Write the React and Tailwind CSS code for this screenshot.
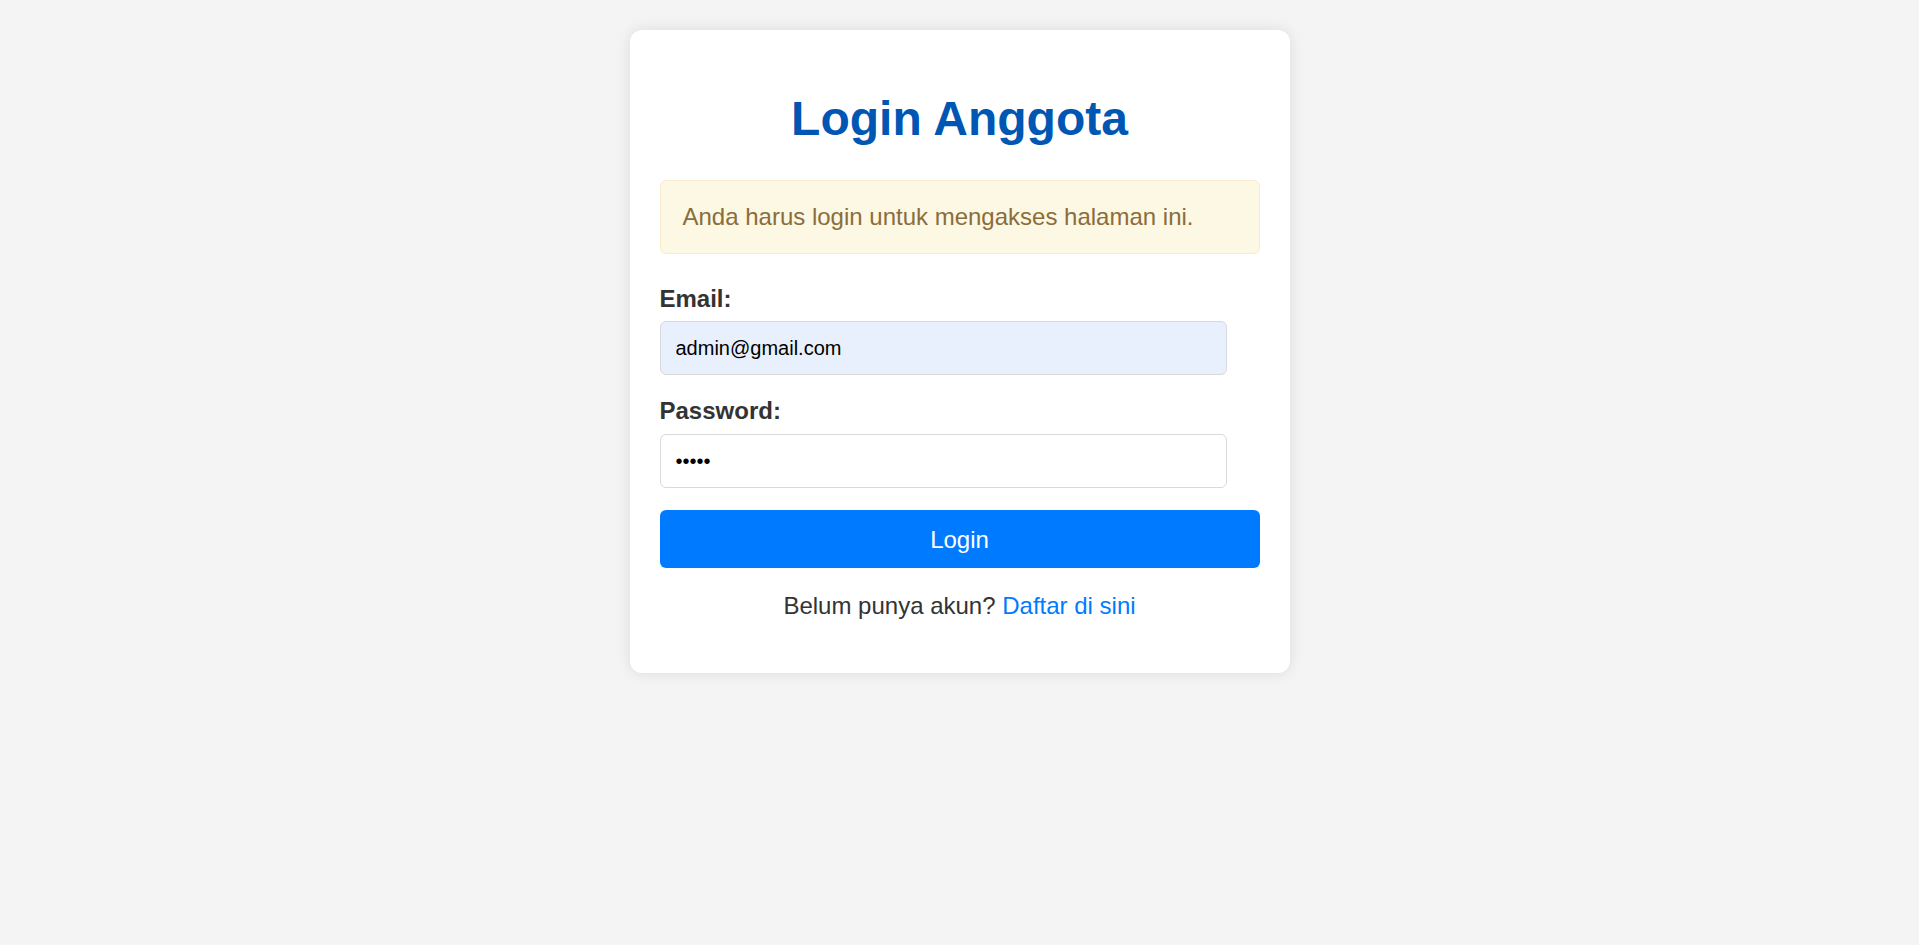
import React from 'react';

export default function App() {
  return (
    <div className="min-h-screen bg-[#f4f4f4] pt-[30px] font-['Liberation_Sans',Arial,sans-serif]">
      <div className="mx-auto w-[660px] rounded-[12px] bg-white p-[30px] shadow-[0_0_15px_rgba(0,0,0,0.1)]">
        {/* Title */}
        <h2 className="mt-[32px] text-center text-[48px] font-bold leading-[54px] text-[#0056b3]">
          Login Anggota
        </h2>

        {/* Warning */}
        <div className="mt-[34px] rounded-[6px] border border-[#faebcc] bg-[#fcf8e3] px-[22px] py-[22px] text-[24px] leading-[28px] text-[#8a6d3b]">
          Anda harus login untuk mengakses halaman ini.
        </div>

        <form className="mt-[31px]" onSubmit={(e) => e.preventDefault()}>
          <div className="mb-[22px]">
            <label className="block text-[24px] font-bold leading-[27px] text-[#333]">Email:</label>
            <input
              type="email"
              readOnly
              value="admin@gmail.com"
              className="mt-[9px] block h-[54px] w-[567px] rounded-[6px] border border-[#d9d9d9] bg-[#e8f0fe] px-[15px] text-[20px] text-black outline-none"
            />
          </div>
          <div className="mb-[22px]">
            <label className="block text-[24px] font-bold leading-[27px] text-[#333]">Password:</label>
            <input
              type="password"
              readOnly
              value="12345"
              className="mt-[10px] block h-[54px] w-[567px] rounded-[6px] border border-[#d9d9d9] bg-white px-[15px] text-[20px] text-black outline-none"
            />
          </div>
          <button
            type="submit"
            className="block h-[58px] w-full rounded-[6px] bg-[#007bff] text-[24px] leading-[27px] text-white"
          >
            Login
          </button>
        </form>

        <p className="mt-[24px] mb-[24px] text-center text-[24px] leading-[27px] text-[#333]">
          Belum punya akun? <a href="#" className="text-[#007bff]">Daftar di sini</a>
        </p>
      </div>
    </div>
  );
}
